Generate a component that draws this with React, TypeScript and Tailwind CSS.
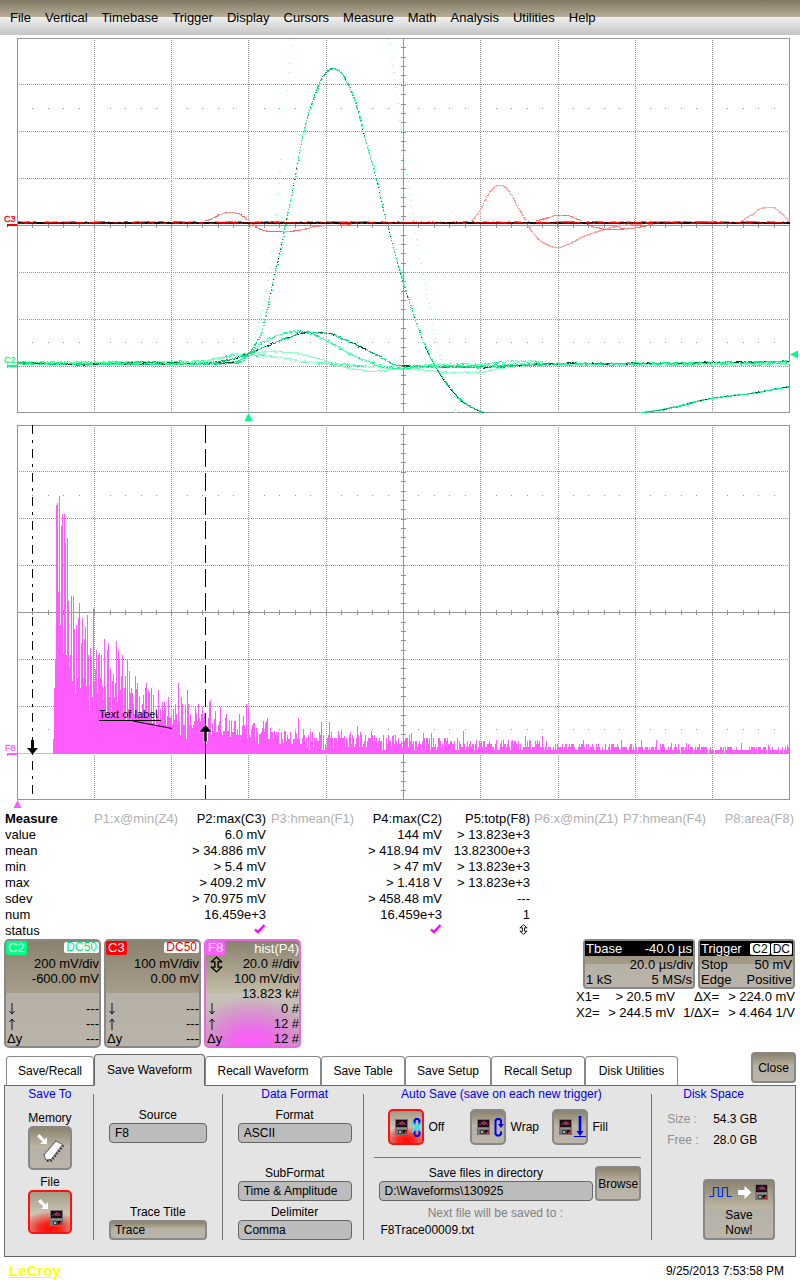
import { useState, type ReactNode } from "react";
import clsx from "clsx";

type Pt = [number, number];

/* ---------- helpers for the scope drawings ---------- */

function makeRandom(seed: number) {
  let s = seed;
  return () => {
    s = (s * 1664525 + 1013904223) % 4294967296;
    return s / 4294967296;
  };
}

/** Smooth curve through the knots (cubic Hermite, finite-difference slopes). */
function curveAt(pts: Pt[], x: number) {
  let i = 0;
  while (i < pts.length - 2 && x > pts[i + 1][0]) i++;
  const [x0, y0] = pts[i];
  const [x1, y1] = pts[i + 1];
  const secant = (a: number) => (pts[a + 1][1] - pts[a][1]) / (pts[a + 1][0] - pts[a][0]);
  const slope = (a: number) => {
    if (a === 0) return secant(0);
    if (a === pts.length - 1) return secant(a - 1);
    const p = secant(a - 1);
    const q = secant(a);
    return p * q <= 0 ? 0 : (2 * p * q) / (p + q);
  };
  const h = x1 - x0;
  const t = (x - x0) / h;
  const t2 = t * t;
  const t3 = t2 * t;
  return (
    (2 * t3 - 3 * t2 + 1) * y0 +
    (t3 - 2 * t2 + t) * h * slope(i) +
    (-2 * t3 + 3 * t2) * y1 +
    (t3 - t2) * h * slope(i + 1)
  );
}

interface TraceSpec {
  pts: Pt[];
  colors: string[];
  noise: number;
  step?: number;
  seed: number;
  wide?: boolean;
}

const PLOT_TOP = 39;
const PLOT_BOTTOM = 412;

/** Sampled trace: every sample is one pixel, spread over the trace's shades. */
function Trace({ pts, colors, noise, step = 0.772, seed, wide }: TraceSpec) {
  const rnd = makeRandom(seed);
  const d = colors.map(() => "");
  let shade = 0;
  for (let x = pts[0][0]; x <= pts[pts.length - 1][0]; x += step) {
    const y = Math.round(curveAt(pts, x) + (rnd() - 0.5) * noise);
    if (rnd() < 0.4) shade = Math.floor(rnd() * colors.length);
    if (y < PLOT_TOP || y > PLOT_BOTTOM) continue;
    const w = wide && rnd() < 0.6 ? 2 : 1;
    d[shade] += `M${Math.round(x)} ${y}h${w}v1h${-w}z`;
  }
  return (
    <g shapeRendering="crispEdges">
      {d.map((p, i) => (
        <path key={i} d={p} fill={colors[i]} />
      ))}
    </g>
  );
}

const GRID_X = [94, 171, 248, 326, 403, 480, 558, 635, 712];

function Grid({ top }: { top: number }) {
  const ys = [46, 93, 140, 187, 234, 281, 328].map((v) => top + v);
  const mid = top + 187;
  let dotted = "";
  GRID_X.forEach((x) => {
    for (let y = top + 2; y < top + 374; y += 2) dotted += `M${x} ${y}h1v1h-1z`;
  });
  ys.forEach((y) => {
    for (let x = 19; x < 789; x += 2) dotted += `M${x} ${y}h1v1h-1z`;
  });
  let ticks = "";
  for (let k = 1; k < 50; k++) {
    const x = Math.round(17 + k * 15.44);
    ticks += `M${x} ${mid - 2}h1v5h-1z`;
    if (k % 5 !== 0) {
      ticks += `M${x} ${top + 70}h1v1h-1zM${x} ${top + 304}h1v1h-1z`;
    }
  }
  for (let k = 1; k < 40; k++) {
    ticks += `M401 ${Math.round(top + k * 9.36)}h5v1h-5z`;
  }
  return (
    <g shapeRendering="crispEdges" fill="#949494">
      <path d={dotted} />
      <path d={ticks} />
      <rect x="17" y={mid} width="772" height="1" />
      <rect x="403" y={top} width="1" height="374" />
      <rect x="17.5" y={top + 0.5} width="772" height="374" fill="none" stroke="#949494" />
    </g>
  );
}

/* ---------- trace data ---------- */

const GREEN_MAIN: Pt[] = [
  [18, 363], [120, 364], [220, 363], [237, 361], [243, 357], [249, 352], [254, 345], [261, 332], [265, 315],
  [269, 298], [275, 270], [280, 249], [284, 228], [290, 200], [297, 163], [303, 132], [310, 107], [317, 87],
  [323, 75], [332, 68], [338, 70], [347, 83], [357, 109], [363, 133], [370, 157], [377, 183], [383, 210],
  [390, 236], [400, 273], [407, 296], [415, 320], [423, 342], [433, 363], [443, 379], [453, 392], [463, 402],
  [473, 408], [482, 412], [500, 419], [560, 424], [620, 418], [643, 412], [657, 410], [673, 407], [700, 400],
  [717, 397], [750, 393], [789, 386],
];
const GREEN_PALE: Pt[] = [
  [249, 352], [253, 340], [258, 322], [267, 280], [273, 233], [278, 183], [284, 110], [289, 63], [292, 39],
  [300, 10], [340, -60], [380, 10], [388, 39], [395, 87], [403, 153], [410, 200], [420, 263], [430, 313],
  [437, 347], [447, 384], [455, 412],
];
const GREEN_A: Pt[] = [
  [18, 362], [80, 364], [140, 362], [200, 363], [230, 359], [248, 353], [267, 345], [287, 337], [300, 333],
  [310, 332], [327, 333], [350, 342], [377, 355], [399, 365], [430, 366], [480, 367], [520, 365], [560, 363],
  [640, 363], [700, 362], [789, 361],
];
const GREEN_B: Pt[] = [
  [18, 362], [100, 362], [200, 363], [240, 362], [249, 353], [263, 341], [280, 334], [297, 331], [310, 333],
  [327, 341], [347, 352], [370, 362], [393, 368], [430, 366], [480, 365], [540, 364], [700, 363], [789, 362],
];
const GREEN_C: Pt[] = [
  [18, 364], [100, 363], [195, 362], [225, 356], [249, 353], [272, 351], [290, 352], [310, 356], [333, 363],
  [350, 368], [375, 371], [400, 368], [425, 370], [450, 372], [475, 372], [500, 368], [540, 364], [789, 363],
];
const GREEN_D: Pt[] = [
  [18, 363], [200, 361], [240, 354], [265, 355], [300, 361], [340, 364], [400, 367], [440, 364], [480, 364],
  [510, 361], [530, 361], [560, 364], [789, 364],
];

const RED_1: Pt[] = [
  [203, 221], [212, 218], [222, 213], [229, 212], [237, 213], [245, 218], [250, 222], [258, 228], [270, 231],
  [286, 231], [303, 229], [315, 226], [330, 225], [350, 224],
];
const RED_2: Pt[] = [
  [470, 221], [475, 216], [480, 208], [488, 193], [493, 187], [498, 185], [503, 186], [508, 191], [515, 203],
  [525, 221], [531, 231], [540, 241], [548, 245], [555, 247], [567, 244], [580, 237], [600, 230], [615, 226],
  [645, 223],
];
const RED_3: Pt[] = [
  [534, 221], [545, 218], [558, 215], [566, 215], [573, 217], [585, 223], [595, 227], [608, 229], [630, 228],
  [655, 223],
];
const RED_4: Pt[] = [
  [740, 221], [746, 217], [753, 213], [760, 208], [767, 207], [772, 207], [777, 210], [789, 221],
];

/* Histogram bar heights, one per pixel column starting at x = 53. */
const HIST_HEAD = [
  14, 65, 93, 248, 250, 161, 257, 128, 227, 239, 100, 239, 210, 98, 215, 152, 86, 98, 157, 72, 157, 124, 60, 128,
  75, 135, 150, 65, 110, 135, 75, 114, 126, 67, 138, 98, 42, 105, 96, 56, 145, 71, 84, 103, 60, 98, 100, 75, 98,
  67, 53, 114, 67, 39, 103, 110, 56, 84, 39, 72, 79, 56, 70, 112, 51, 103, 93, 63, 77, 98, 35, 65, 77, 32, 93, 44,
  82, 60, 65, 60, 49, 39, 77, 64, 70, 36, 56, 40, 36, 49, 58, 41, 65, 70, 35, 63, 60, 35, 65, 30, 58, 34, 25, 44,
  38, 63, 33, 44, 35, 51, 42, 51, 46, 28, 37, 56, 36, 35, 37, 29, 44, 33, 49, 39, 29, 70, 32, 18, 56, 49, 28, 28,
  48, 14, 63, 49, 28, 39, 28, 25, 28, 32, 46, 40, 32, 49, 35, 32, 39, 46, 35, 39, 32, 9, 12, 35, 51, 53, 18, 30,
  22, 34, 42, 21, 21, 28, 32, 46, 21, 18, 22, 22, 35, 39, 22, 22, 32, 16, 32, 21, 21, 32, 32, 18, 24, 18, 39, 18,
  18, 27, 37, 28, 24, 49, 15, 46, 18, 16, 24, 28, 30, 30, 11, 25, 21, 9, 19, 19, 21, 25, 32, 22, 30, 32, 35, 14,
  14, 25, 21, 21, 14, 22, 18, 21, 18, 21, 9, 9, 21, 14, 10, 22, 22, 12, 18, 14, 14, 21, 9, 9, 14, 14, 22, 19, 14,
  35, 14,
];
const HIST_PEAKS: Record<number, number> = {
  303: 24, 310: 22, 321: 31, 329: 31, 338: 22, 341: 22, 344: 17, 357: 27, 358: 18, 371: 22, 372: 18, 392: 17,
  411: 20, 423: 20, 431: 20, 445: 15, 463: 22, 476: 13, 496: 13, 503: 13, 508: 13, 512: 13, 525: 17, 529: 13,
  537: 13, 542: 17, 583: 13, 621: 13, 641: 13, 656: 13, 671: 10, 686: 10, 741: 10, 768: 8, 787: 8,
};

function buildHistogram() {
  const rnd = makeRandom(77);
  let d = "";
  HIST_HEAD.forEach((h, i) => {
    d += `M${53 + i} 754v${-h - 1}h1v${h + 1}z`;
  });
  for (let x = 53 + HIST_HEAD.length; x < 790; x++) {
    const mean = 1.5 + 13.5 * Math.exp(-(x - 300) / 270);
    const raw = mean * (0.25 + rnd() * 1.4);
    const h = HIST_PEAKS[x] ?? Math.round(Math.round(raw / 3) * 3);
    d += `M${x} 754v${-h - 1}h1v${h + 1}z`;
  }
  return d;
}
const HISTOGRAM = buildHistogram();

function ScopeTop() {
  const redTones = ["#ff9c9c", "#ff8080", "#ff6060"];
  return (
    <svg viewBox="0 35 800 386" className="block w-full" role="img" aria-label="Channel traces C2 and C3">
      <Grid top={38} />
      <Trace pts={GREEN_PALE} colors={["#b4ffdc", "#a0ffd0"]} noise={1} step={1} seed={5} wide />
      <Trace pts={GREEN_C} colors={["#a0ffd0", "#80ffc0"]} noise={1.4} seed={11} wide />
      <Trace pts={GREEN_D} colors={["#80ffc0", "#a0ffd0", "#40f5a0"]} noise={2.4} seed={12} wide />
      <Trace pts={GREEN_B} colors={["#60ffb0", "#20f090"]} noise={2.2} seed={13} wide />
      <Trace pts={GREEN_A} colors={["#00d070", "#00b860", "#005028", "#20f090", "#00e880"]} noise={1.4} seed={14} wide />
      <Trace pts={GREEN_MAIN} colors={["#20f090", "#60ffb0", "#00d878"]} noise={1} step={0.6} seed={15} wide />
      <Trace
        pts={GREEN_MAIN}
        colors={["#20f090", "#00e880", "#004824", "#00c068", "#20f090"]}
        noise={0.6}
        step={1}
        seed={19}
      />
      <Trace pts={RED_1} colors={redTones} noise={0.6} seed={21} wide />
      <Trace pts={RED_2} colors={["#ffb0b0", "#ff9c9c"]} noise={0.8} step={0.5} seed={22} wide />
      <Trace pts={RED_3} colors={redTones} noise={0.6} seed={23} wide />
      <Trace pts={RED_4} colors={["#ffb8b8", "#ffa8a8"]} noise={0.8} step={0.5} seed={24} wide />
      <rect x="18" y="222" width="771" height="2" fill="#ff0000" shapeRendering="crispEdges" />
      <Trace pts={[[18, 221], [789, 221]]} colors={["#ff5050", "#ff9090", "#ffffff"]} noise={0} seed={31} wide />
      <Trace pts={[[18, 222], [789, 222]]} colors={["#ff0000", "#d00000", "#200000"]} noise={0} seed={32} wide />
      <Trace pts={[[18, 223], [789, 223]]} colors={["#200000", "#d00000", "#000000"]} noise={0.9} seed={33} wide />
      <g shapeRendering="crispEdges">
        <path d="M7 224h10v2h-9v1h-1z" fill="#ff0000" />
        <path d="M7 365h10v2h-9v1h-1z" fill="#00ff80" />
      </g>
      <text x="4" y="222" fontSize="9" fill="#ff0000" stroke="#ff0000" strokeWidth="0.3">C3</text>
      <text x="4" y="363" fontSize="9" fill="#00ff80" stroke="#00ff80" strokeWidth="0.3">C2</text>
      <path d="M248.500 413l4 8h-8z" fill="#00ff80" />
      <path d="M790 354.500l8-4v8z" fill="#00ff80" />
    </svg>
  );
}

function ScopeBottom() {
  return (
    <svg viewBox="0 421 800 390" className="block w-full" role="img" aria-label="Histogram F8">
      <Grid top={425} />
      <g shapeRendering="crispEdges">
        <rect x="18" y="753" width="771" height="1" fill="#ff99ff" />
        <path d={HISTOGRAM} fill="#ff5cff" />
        <path d="M7 753h10v2h-9v1h-1z" fill="#ff5cff" />
        <path d="M32.500 425V799" stroke="#000000" strokeDasharray="9 6 3 6" />
        <path d="M205.500 425V799" stroke="#000000" strokeDasharray="18 6" />
        <path d="M205.500 741V770" stroke="#000000" />
        <path d="M99 720.500H161" stroke="#000000" />
      </g>
      <path d="M133 721L172 728.500" stroke="#000000" />
      <path d="M31 740h3v8h4l-5.500 6.500L27 748h4z" fill="#000000" />
      <path d="M204 742v-10h-5l6.500-7.500 6.500 7.500h-5v10z" fill="#000000" stroke="#ffffff" strokeWidth="0.5" />
      <text x="5" y="751" fontSize="9" fill="#ff5cff" stroke="#ff5cff" strokeWidth="0.3">F8</text>
      <text x="99" y="718" fontSize="11" fill="#000000">Text of label</text>
      <path d="M17.500 800l4 8h-8z" fill="#ff5cff" />
    </svg>
  );
}

/* ---------- measurement table ---------- */

const CHECK = "check";
const SPREAD = "spread";
const PARAMS: { name: string; values: string[] }[] = [
  { name: "P1:x@min(Z4)", values: [] },
  { name: "P2:max(C3)", values: ["6.0 mV", "> 34.886 mV", "> 5.4 mV", "> 409.2 mV", "> 70.975 mV", "16.459e+3", CHECK] },
  { name: "P3:hmean(F1)", values: [] },
  { name: "P4:max(C2)", values: ["144 mV", "> 418.94 mV", "> 47 mV", "> 1.418 V", "> 458.48 mV", "16.459e+3", CHECK] },
  { name: "P5:totp(F8)", values: ["> 13.823e+3", "13.82300e+3", "> 13.823e+3", "> 13.823e+3", "---", "1", SPREAD] },
  { name: "P6:x@min(Z1)", values: [] },
  { name: "P7:hmean(F4)", values: [] },
  { name: "P8:area(F8)", values: [] },
];
const STATS = ["value", "mean", "min", "max", "sdev", "num", "status"];

function SpreadIcon({ className, strokeWidth }: { className: string; strokeWidth: number }) {
  return (
    <svg viewBox="0 0 14 18" className={className} fill="none" stroke="#000" strokeWidth={strokeWidth} aria-hidden="true">
      <path d="M1 6.500L7 1L13 6.500M1 11.500L7 17L13 11.500" />
      <path d="M1 6.200H5.200V11.800H1M13 6.200H8.800V11.800H13" />
    </svg>
  );
}

function Cell({ value }: { value?: string }) {
  if (value === CHECK)
    return (
      <svg viewBox="0 0 12 10" className="mb-1 ml-auto h-[10px] w-3" aria-label="ok">
        <path d="M1 5.500L4 8L10.500 1" fill="none" stroke="#ff00ff" strokeWidth="2.4" />
      </svg>
    );
  if (value === SPREAD)
    return <SpreadIcon className="mr-[2px] mb-1 ml-auto h-[11px] w-[9px]" strokeWidth={1.5} />;
  return <>{value}</>;
}

function MeasureTable() {
  return (
    <div className="pr-[6px] pl-[5px]">
      <table className="w-full table-fixed border-collapse text-right text-[13px] leading-4 whitespace-nowrap">
        <thead>
          <tr>
            <th scope="col" className="w-[85px] p-0 text-left font-bold">Measure</th>
            {PARAMS.map((p) => (
              <th
                key={p.name}
                scope="col"
                className={clsx("p-0 font-normal", p.values.length ? "text-black" : "text-[#b0b0b0]")}
              >
                {p.name}
              </th>
            ))}
          </tr>
        </thead>
        <tbody>
          {STATS.map((s, i) => (
            <tr key={s} className="h-4">
              <th scope="row" className="p-0 text-left font-normal">{s}</th>
              {PARAMS.map((p) => (
                <td key={p.name} className="p-0">
                  <Cell value={p.values[i]} />
                </td>
              ))}
            </tr>
          ))}
        </tbody>
      </table>
    </div>
  );
}

/* ---------- descriptor boxes ---------- */

interface ChannelProps {
  name: string;
  tag: string;
  badge?: string;
  badgeColor?: string;
  title?: string;
  box: string;
  rows: [ReactNode, string][];
}

function Channel({ name, tag, badge, badgeColor, title, box, rows }: ChannelProps) {
  return (
    <button type="button" className={clsx("block w-[97px] rounded-[5px] border-2 text-[13px] leading-[15px]", box)}>
      <span className="flex h-[15px] items-start justify-between">
        <span className={clsx("h-[14px] rounded-[2px] px-[2px] leading-[14px] text-white", tag)}>{name}</span>
        {badge && (
          <span className={clsx("mt-px h-[11px] rounded-[2px] bg-white px-[2px] text-[12px] leading-[11px]", badgeColor)}>
            {badge}
          </span>
        )}
        {title && <span className="text-white">{title}</span>}
      </span>
      {rows.map(([l, r], i) => (
        <span key={i} className="flex h-[15px] justify-between pl-px">
          <span>{l}</span>
          <span>{r}</span>
        </span>
      ))}
    </button>
  );
}

const channelBox =
  "border-[#888888] bg-[linear-gradient(to_bottom,#8b836f_0%,#a69e8a_50%,#b6b1a7_50%,#b9b3a9_100%)]";

function Arrow({ up }: { up?: boolean }) {
  return (
    <svg viewBox="0 0 6 12" className={clsx("mt-[2px] ml-[2px] h-3 w-[6px]", up && "rotate-180")} aria-hidden="true">
      <path d="M3 0V11M0.500 8L3 11L5.500 8" fill="none" stroke="#101030" />
    </svg>
  );
}

function Descriptors() {
  const dashes: [ReactNode, string][] = [
    ["", ""],
    [<Arrow />, "---"],
    [<Arrow up />, "---"],
    ["Δy", "---"],
  ];
  const small =
    "rounded-[4px] border-2 border-[#888888] bg-[linear-gradient(to_bottom,#8b836f_0%,#a69e8a_50%,#b6b1a7_50%,#b9b3a9_100%)] text-[13px] leading-[15px]";
  return (
    <div className="flex items-start justify-between pr-[5px] pl-1">
      <div className="flex gap-[3px]">
        <Channel
          name="C2"
          tag="bg-[#00ff80]"
          badge="DC50"
          badgeColor="text-[#00e878]"
          box={channelBox}
          rows={[["", "200 mV/div"], ["", "-600.00 mV"], ...dashes]}
        />
        <Channel
          name="C3"
          tag="bg-[#ff0000]"
          badge="DC50"
          badgeColor="text-[#e00000]"
          box={channelBox}
          rows={[["", "100 mV/div"], ["", "0.00 mV"], ...dashes]}
        />
        <Channel
          name="F8"
          tag="bg-[#ff5cff]"
          title="hist(P4)"
          box="border-[#e46ae0] bg-[radial-gradient(ellipse_70%_48%_at_50%_100%,#ff5cff_0%,#f066ee_30%,transparent_100%),linear-gradient(to_bottom,#8b836f_0%,#c2bba6_50%,#c6c2b8_50%,#b9b3a9_100%)]"
          rows={[
            [<SpreadIcon className="ml-[3px] h-[17px] w-[13px]" strokeWidth={1.5} />, "20.0 #/div"],
            ["", "100 mV/div"],
            ["", "13.823 k#"],
            [<Arrow />, "0 #"],
            [<Arrow up />, "12 #"],
            ["Δy", "12 #"],
          ]}
        />
      </div>
      <div className="w-[219px]">
        <div className="ml-[7px] flex gap-[3px]">
          <button type="button" className={clsx(small, "basis-[112px]")}>
            <span className="mb-px flex h-[15px] justify-between bg-black px-px text-white">
              <span>Tbase</span>
              <span>-40.0 µs</span>
            </span>
            <span className="block h-[15px] text-right">20.0 µs/div</span>
            <span className="flex h-[15px] justify-between px-px">
              <span>1 kS</span>
              <span>5 MS/s</span>
            </span>
          </button>
          <button type="button" className={clsx(small, "basis-[97px]")}>
            <span className="mb-px flex h-[15px] items-center justify-between bg-black px-px text-white">
              <span>Trigger</span>
              <span className="flex gap-px text-[12px] leading-3 text-black">
                <span className="rounded-[2px] bg-white px-[2px]">C2</span>
                <span className="rounded-[2px] bg-white px-[2px]">DC</span>
              </span>
            </span>
            <span className="flex h-[15px] justify-between px-px">
              <span>Stop</span>
              <span>50 mV</span>
            </span>
            <span className="flex h-[15px] justify-between px-px">
              <span>Edge</span>
              <span>Positive</span>
            </span>
          </button>
        </div>
        <table className="w-full table-fixed border-collapse text-right text-[13px] leading-4 whitespace-nowrap">
          <tbody>
            <tr>
              <th scope="row" className="w-6 p-0 text-left font-normal">X1=</th>
              <td className="w-[75px] p-0">&gt; 20.5 mV</td>
              <th scope="row" className="w-[44px] p-0 font-normal">ΔX=</th>
              <td className="p-0">&gt; 224.0 mV</td>
            </tr>
            <tr>
              <th scope="row" className="p-0 text-left font-normal">X2=</th>
              <td className="p-0">&gt; 244.5 mV</td>
              <th scope="row" className="p-0 font-normal">1/ΔX=</th>
              <td className="p-0">&gt; 4.464 1/V</td>
            </tr>
          </tbody>
        </table>
      </div>
    </div>
  );
}

/* ---------- icons ---------- */

function ScopeGlyph({ x, y }: { x: number; y: number }) {
  return (
    <g transform={`translate(${x} ${y})`}>
      <rect width="13" height="16" fill="#747474" />
      <rect x="1" y="1" width="11" height="7" fill="#1c0c16" />
      <path d="M2 6l2-1 1-2 1 3 1-4 1 4 1-3 1 2.500h1" fill="none" stroke="#a83868" strokeWidth="0.9" />
      <rect x="1" y="9" width="11" height="1" fill="#909090" />
      <rect x="3" y="11" width="4" height="4" fill="#404040" />
      <rect x="4" y="12" width="2" height="2" fill="#b0b0b0" />
      <rect x="7.500" y="11" width="4" height="4" fill="#101010" />
      <path d="M8 15l3.500-4v4z" fill="#e82020" />
    </g>
  );
}

function MemoryIcon() {
  return (
    <svg viewBox="0 0 40 40" className="size-full" aria-hidden="true">
      <path d="M7 8.500L9.500 6L14.500 11.500L17 9V16H10L12.500 13.500z" fill="#fff" />
      <path d="M14 27L26 13L32.500 16.500L21 31.500L16 32z" fill="#fff" stroke="#3c3c3c" strokeWidth="0.8" />
      <path d="M13.500 26.500L25.500 12.500" stroke="#555" strokeWidth="1" strokeDasharray="1 2.500" />
      <path d="M17 33L21.500 32.500L33.500 17.500" fill="none" stroke="#303030" strokeWidth="2" strokeDasharray="1.600 1.600" />
    </svg>
  );
}

function FileIcon() {
  return (
    <svg viewBox="0 0 40 40" className="size-full" aria-hidden="true">
      <path d="M8 9.500L10.500 7L15.500 12.500L18 10V17H11L13.500 14.500z" fill="#fff" />
      <ScopeGlyph x={20} y={18} />
    </svg>
  );
}

function AutoIcon({ kind }: { kind: "off" | "wrap" | "fill" }) {
  return (
    <svg viewBox="0 0 32 32" className="size-full" aria-hidden="true">
      <ScopeGlyph x={5} y={8} />
      {kind === "off" && (
        <g fill="none" strokeWidth="2">
          <path d="M24.500 14V9.500L26 8H28L29.500 9.500V14M24.500 19V23.500L26 25H28L29.500 23.500V19" stroke="#0000e8" />
          <path d="M22 11.500L32 21M32 11.500L22 21" stroke="#20e8f8" strokeWidth="2.200" />
        </g>
      )}
      {kind === "wrap" && (
        <g>
          <path
            d="M29 14V9.500L27.500 8H25L23.500 9.500V23L25 24.500H27.500L29 23V20.500"
            fill="none"
            stroke="#0000e8"
            strokeWidth="2"
          />
          <path d="M26 13H32L29 17z" fill="#0000e8" />
        </g>
      )}
      {kind === "fill" && (
        <g>
          <path d="M26 5V22" stroke="#0000e8" strokeWidth="2.600" />
          <path d="M22.500 20H29.500L26 25z" fill="#0000e8" />
          <path d="M20 25.500H32" stroke="#0000e8" />
        </g>
      )}
    </svg>
  );
}

/* ---------- dialog ---------- */

const beige =
  "border-2 border-[#888888] bg-[linear-gradient(to_bottom,#8b836f_0%,#bfb8a5_50%,#b6b1a7_50%,#bbb5aa_100%)]";
const hot =
  "border-2 border-[#ff1010] bg-[radial-gradient(ellipse_75%_45%_at_50%_92%,#ff0808_0%,#f82820_35%,transparent_100%),linear-gradient(to_bottom,#a39b87_0%,#cdc6b5_55%,#c8c1b2_100%)]";

function Choice(props: {
  group: string;
  label: string;
  checked: boolean;
  onPick: () => void;
  vertical?: boolean;
  children: ReactNode;
}) {
  const { group, label, checked, onPick, vertical, children } = props;
  return (
    <label
      className={clsx(
        "relative flex cursor-pointer items-center leading-[15px]",
        vertical ? "flex-col" : "w-[82px] flex-row-reverse justify-end gap-[5px]",
      )}
    >
      <span>{label}</span>
      <input type="radio" name={group} className="sr-only" checked={checked} onChange={onPick} />
      <span className={clsx("block rounded-[5px]", vertical ? "size-11" : "size-9", checked ? hot : beige)}>
        {children}
      </span>
    </label>
  );
}

function Field({ id, label, value, raised }: { id: string; label: string; value: string; raised?: boolean }) {
  return (
    <div className="flex flex-col">
      <label htmlFor={id} className="text-center leading-[15px]">{label}</label>
      <input
        id={id}
        type="text"
        defaultValue={value}
        className={clsx(
          "h-5 w-full min-w-0 rounded-[4px] outline-none",
          raised ? `pl-1 ${beige}` : "border border-[#666666] bg-[#bcbcbc] pl-[5px]",
        )}
      />
    </div>
  );
}

function Heading({ children }: { children: ReactNode }) {
  return <h2 className="-mt-2 h-4 text-center leading-4 whitespace-nowrap text-[#0000f0]">{children}</h2>;
}

const TABS: [string, string][] = [
  ["Save/Recall", "basis-[88px]"],
  ["Save Waveform", "basis-[111px]"],
  ["Recall Waveform", "basis-[116px]"],
  ["Save Table", "basis-[84px]"],
  ["Save Setup", "basis-[86px]"],
  ["Recall Setup", "basis-[94px]"],
  ["Disk Utilities", "basis-[93px]"],
];

function SaveDialog() {
  const [tab, setTab] = useState("Save Waveform");
  const [target, setTarget] = useState("File");
  const [auto, setAuto] = useState("Off");
  return (
    <section className="mt-1 px-1 text-[12px]">
      <div className="flex items-end justify-between">
        <div role="tablist" className="z-10 -mb-px flex items-end pl-[2px]">
          {TABS.map(([name, basis]) => (
            <button
              key={name}
              type="button"
              role="tab"
              aria-selected={tab === name}
              onClick={() => setTab(name)}
              className={clsx(
                "shrink-0 rounded-t-[4px] border whitespace-nowrap",
                basis,
                tab === name
                  ? "h-8 border-[#666666] border-b-[#e4e4e4] bg-[#e4e4e4]"
                  : "h-[30px] border-[#888888] border-b-[#666666] bg-white",
              )}
            >
              {name}
            </button>
          ))}
        </div>
        <button type="button" className={clsx("mb-[2px] h-[31px] w-[45px] rounded-[4px]", beige)}>Close</button>
      </div>
      <div
        role="tabpanel"
        className="grid grid-cols-[89fr_129fr_141fr_289fr_143fr] border border-[#666666] bg-[#e4e4e4] pt-[8px] pb-4"
      >
        <div className="flex flex-col items-center border-r border-[#777777] pl-[2px]">
          <Heading>Save To</Heading>
          <div className="mt-[9px] flex flex-col gap-[5px]">
            <Choice group="target" label="Memory" checked={target === "Memory"} onPick={() => setTarget("Memory")} vertical>
              <MemoryIcon />
            </Choice>
            <Choice group="target" label="File" checked={target === "File"} onPick={() => setTarget("File")} vertical>
              <FileIcon />
            </Choice>
          </div>
        </div>
        <div className="flex flex-col justify-between border-r border-[#777777] px-[15px] pt-[14px]">
          <Field id="source" label="Source" value="F8" />
          <Field id="title" label="Trace Title" value="Trace" raised />
        </div>
        <div className="flex flex-col border-r border-[#777777] pr-[11px] pl-[15px]">
          <Heading>Data Format</Heading>
          <div className="mt-[6px] flex grow flex-col justify-between">
            <Field id="format" label="Format" value="ASCII" />
            <div className="flex flex-col gap-1">
              <Field id="subformat" label="SubFormat" value="Time & Amplitude" />
              <Field id="delimiter" label="Delimiter" value="Comma" />
            </div>
          </div>
        </div>
        <div className="flex flex-col border-r border-[#777777] px-[10px] pb-px">
          <div className="pr-3">
            <Heading>Auto Save (save on each new trigger)</Heading>
          </div>
          <div className="mt-[7px] ml-[14px] flex">
            {(["Off", "Wrap", "Fill"] as const).map((k) => (
              <Choice key={k} group="auto" label={k} checked={auto === k} onPick={() => setAuto(k)}>
                <AutoIcon kind={k.toLowerCase() as "off" | "wrap" | "fill"} />
              </Choice>
            ))}
          </div>
          <hr className="mt-3 mb-2 border-[#777777]" />
          <div className="flex items-end gap-[2px] pl-[5px]">
            <div className="grow">
              <Field id="directory" label="Save files in directory" value="D:\Waveforms\130925" />
            </div>
            <button type="button" className={clsx("h-[35px] w-[46px] rounded-[4px] whitespace-nowrap", beige)}>
              <span className="-mx-1">Browse</span>
            </button>
          </div>
          <p className="mt-1 pr-6 text-center leading-4 text-[#808080]">Next file will be saved to :</p>
          <p className="pl-[7px] leading-[18px]">F8Trace00009.txt</p>
        </div>
        <div className="flex flex-col">
          <div className="pr-5">
            <Heading>Disk Space</Heading>
          </div>
          <dl className="mt-[9px] grid grid-cols-[46px_1fr] gap-y-[5px] pl-[15px] leading-4">
            <dt className="text-[#909090]">Size :</dt>
            <dd>54.3 GB</dd>
            <dt className="text-[#909090]">Free :</dt>
            <dd>28.0 GB</dd>
          </dl>
          <button
            type="button"
            className={clsx("mt-auto mr-5 flex h-[61px] w-[72px] flex-col items-center self-end rounded-[4px] leading-[15px]", beige)}
          >
            <svg viewBox="0 0 68 26" className="h-[26px] w-[68px]" aria-hidden="true">
              <path d="M4 15.500H8.500V6.500H13.500V15.500H17.500V6.500H22.500V15.500H27" fill="none" stroke="#0030e0" strokeWidth="1.200" />
              <path d="M33 9H39.500V5L46.500 11.500L39.500 18V14H33z" fill="#fff" />
              <ScopeGlyph x={50} y={3} />
              <path d="M64.500 7V18" stroke="#80c890" />
            </svg>
            <span className="mt-px">Save</span>
            <span>Now!</span>
          </button>
        </div>
      </div>
    </section>
  );
}

const MENU = [
  "File", "Vertical", "Timebase", "Trigger", "Display", "Cursors", "Measure", "Math", "Analysis", "Utilities", "Help",
];

export default function App() {
  return (
    <div className="min-h-screen bg-white font-['Liberation_Sans',Arial,sans-serif] text-black">
      <nav className="flex h-[35px] items-center gap-[14px] bg-[linear-gradient(to_bottom,#7f7763_0%,#b9b09b_49%,#f0f0f0_49%,#c4c4c4_100%)] pl-[10px] text-[13px]">
        {MENU.map((m) => (
          <button key={m} type="button">{m}</button>
        ))}
      </nav>
      <main>
        <ScopeTop />
        <ScopeBottom />
        <MeasureTable />
        <Descriptors />
        <SaveDialog />
      </main>
      <footer className="flex h-[22px] items-center justify-between pr-4 pl-[9px] text-[12px]">
        <a href="#about" className="mt-[6px] text-[15px] leading-4 font-bold text-[#ffff00] underline">LeCroy</a>
        <span className="mt-[6px]">9/25/2013 7:53:58 PM</span>
      </footer>
    </div>
  );
}
